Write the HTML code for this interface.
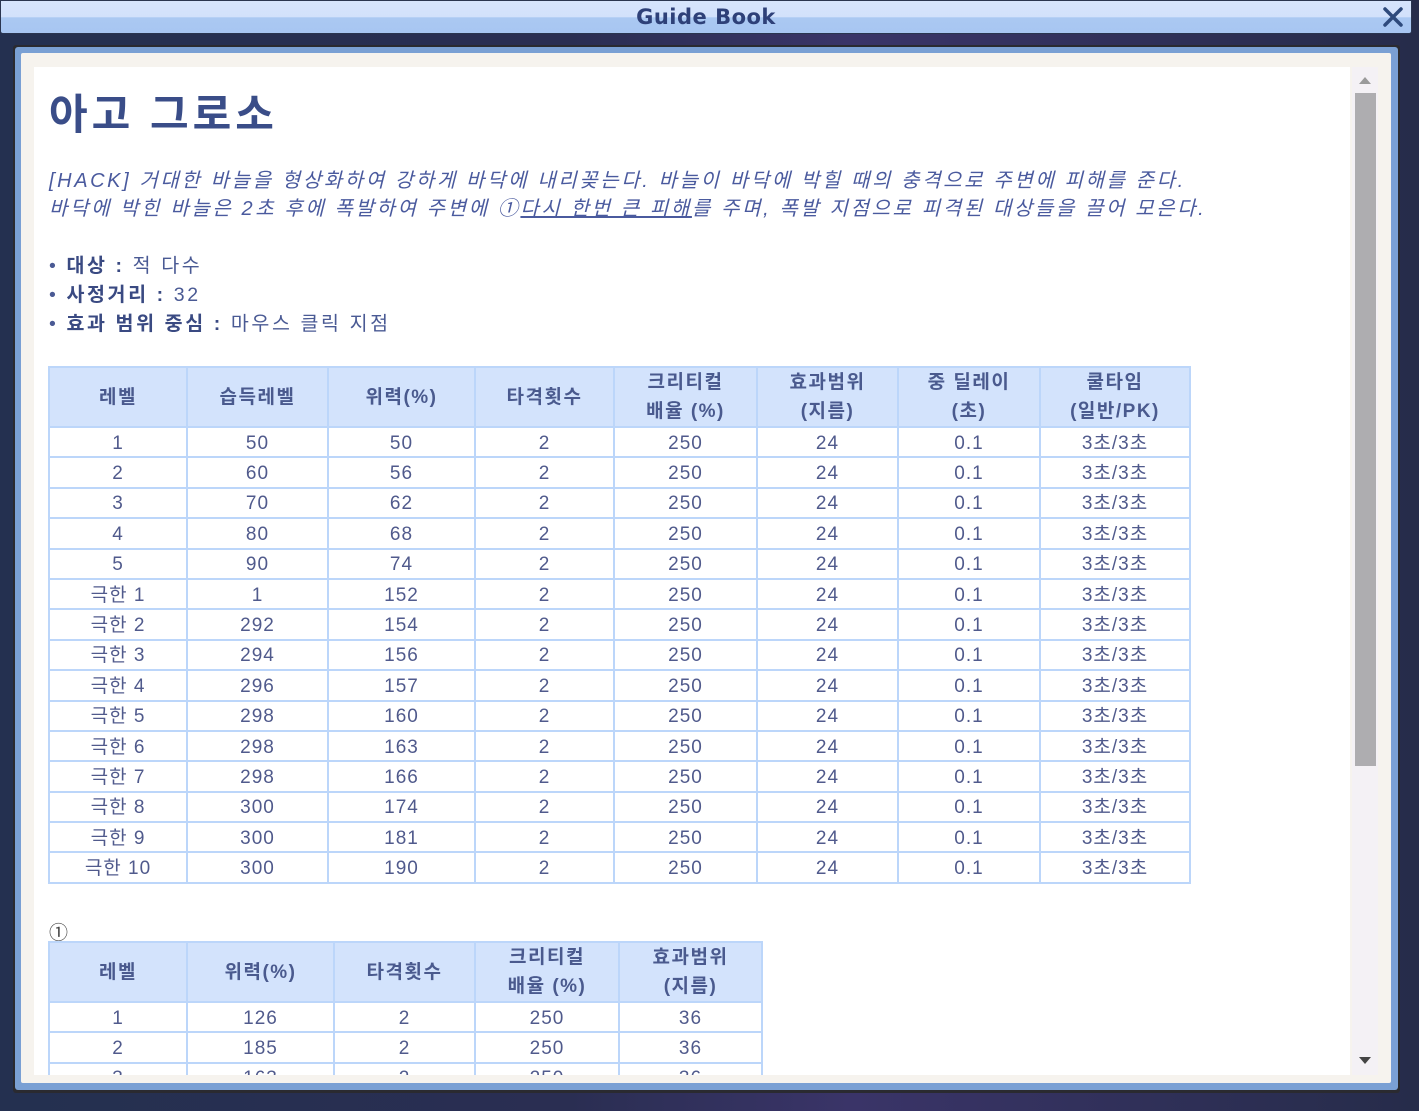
<!DOCTYPE html>
<html><head><meta charset="utf-8">
<style>
*{margin:0;padding:0;box-sizing:border-box}
body{width:1419px;height:1111px;overflow:hidden;background:#1e2238;font-family:"Liberation Sans","Noto Sans CJK KR",sans-serif;position:relative}
.bg{position:absolute;left:0;top:0;width:1419px;height:1111px;background:linear-gradient(90deg,#243050 0%,#2a2e52 40%,#3a3468 60%,#262c4a 100%)}
.title{position:absolute;left:0;top:0;width:1412px;height:34px;border:1px solid #2a3550;border-radius:0 0 3px 3px;background:linear-gradient(#d6e4fc 0,#d2e1fb 50%,#aac8f2 52%,#a8c6f2 100%)}
.title span{position:absolute;left:0;width:100%;top:4px;text-align:center;font-weight:bold;font-size:21px;color:#2e4078;font-family:"DejaVu Sans","Liberation Sans",sans-serif;letter-spacing:0.5px}
.x{position:absolute;left:1378px;top:2px;width:28px;height:28px}
.frame{position:absolute;left:13px;top:45px;width:1387px;height:1048px;background:#2a2a30;border-radius:3px}
.frame2{position:absolute;left:15px;top:47px;width:1383px;height:1043px;background:#7aa0d4;border-radius:3px}
.cream{position:absolute;left:21px;top:53px;width:1370px;height:1030px;background:#f6f3ee;border-radius:2px}
.content{position:absolute;left:34px;top:67px;width:1316px;height:1008px;background:#fff;overflow:hidden;color:#3e4d86}
.track{position:absolute;left:1352px;top:67px;width:26px;height:1008px;background:#f4f1f5}
.thumb{position:absolute;left:1355px;top:93px;width:21px;height:673px;background:#aeadb0}
.up{position:absolute;left:1359px;top:77px;width:0;height:0;border-left:6px solid transparent;border-right:6px solid transparent;border-bottom:7px solid #9a9a9a}
.dn{position:absolute;left:1359px;top:1057px;width:0;height:0;border-left:6px solid transparent;border-right:6px solid transparent;border-top:7px solid #444}
h1{position:absolute;left:15px;top:14px;font-size:42px;font-weight:bold;color:#3a4d88;letter-spacing:4px}
.desc{position:absolute;left:15px;top:100px;font-size:20px;font-style:italic;line-height:28px;color:#4a5a9e;white-space:nowrap;letter-spacing:2.6px}
.desc u{text-decoration:underline}
.bul{position:absolute;left:15px;top:185px;font-size:19.5px;line-height:29px;color:#4a5a94;white-space:nowrap;letter-spacing:2.6px}
.bul b{color:#3a4a82}
table{position:absolute;border-collapse:collapse;table-layout:fixed;color:#505a8c}
td,th{border:2px solid #bcd6fa;text-align:center;font-size:19px;padding:0;line-height:1;letter-spacing:1px}
th{background:#d3e3fc;font-weight:bold;color:#4a5a8e;font-size:19px;line-height:29px;letter-spacing:1.5px}
td{height:30.4px;padding-top:2px}
.c1{position:absolute;left:15px;top:851px;font-size:19px;color:#444}
</style></head><body>
<div class="bg"></div>
<div class="title"><span>Guide Book</span>
<svg class="x" viewBox="0 0 28 28"><path d="M6 6L22 22M22 6L6 22" stroke="#2e4a7c" stroke-width="3.5" stroke-linecap="round"/></svg></div>
<div class="frame"></div><div class="frame2"></div><div class="cream"></div>
<div class="content">
<h1>아고 그로소</h1>
<div class="desc">[HACK] 거대한 바늘을 형상화하여 강하게 바닥에 내리꽂는다. 바늘이 바닥에 박힐 때의 충격으로 주변에 피해를 준다.<br>바닥에 박힌 바늘은 2초 후에 폭발하여 주변에 ①<u>다시 한번 큰 피해</u>를 주며, 폭발 지점으로 피격된 대상들을 끌어 모은다.</div>
<div class="bul">• <b>대상 :</b> 적 다수<br>• <b>사정거리 :</b> 32<br>• <b>효과 범위 중심 :</b> 마우스 클릭 지점</div>
<table style="left:14px;top:299px;width:1141px">
<colgroup><col style="width:138px"><col style="width:141px"><col style="width:147px"><col style="width:139px"><col style="width:143px"><col style="width:141px"><col style="width:142px"><col style="width:150px"></colgroup>
<tr style="height:60px"><th>레벨</th><th>습득레벨</th><th>위력(%)</th><th>타격횟수</th><th>크리티컬<br>배율 (%)</th><th>효과범위<br>(지름)</th><th>중 딜레이<br>(초)</th><th>쿨타임<br>(일반/PK)</th></tr>
<tr><td>1</td><td>50</td><td>50</td><td>2</td><td>250</td><td>24</td><td>0.1</td><td>3초/3초</td></tr>
<tr><td>2</td><td>60</td><td>56</td><td>2</td><td>250</td><td>24</td><td>0.1</td><td>3초/3초</td></tr>
<tr><td>3</td><td>70</td><td>62</td><td>2</td><td>250</td><td>24</td><td>0.1</td><td>3초/3초</td></tr>
<tr><td>4</td><td>80</td><td>68</td><td>2</td><td>250</td><td>24</td><td>0.1</td><td>3초/3초</td></tr>
<tr><td>5</td><td>90</td><td>74</td><td>2</td><td>250</td><td>24</td><td>0.1</td><td>3초/3초</td></tr>
<tr><td>극한 1</td><td>1</td><td>152</td><td>2</td><td>250</td><td>24</td><td>0.1</td><td>3초/3초</td></tr>
<tr><td>극한 2</td><td>292</td><td>154</td><td>2</td><td>250</td><td>24</td><td>0.1</td><td>3초/3초</td></tr>
<tr><td>극한 3</td><td>294</td><td>156</td><td>2</td><td>250</td><td>24</td><td>0.1</td><td>3초/3초</td></tr>
<tr><td>극한 4</td><td>296</td><td>157</td><td>2</td><td>250</td><td>24</td><td>0.1</td><td>3초/3초</td></tr>
<tr><td>극한 5</td><td>298</td><td>160</td><td>2</td><td>250</td><td>24</td><td>0.1</td><td>3초/3초</td></tr>
<tr><td>극한 6</td><td>298</td><td>163</td><td>2</td><td>250</td><td>24</td><td>0.1</td><td>3초/3초</td></tr>
<tr><td>극한 7</td><td>298</td><td>166</td><td>2</td><td>250</td><td>24</td><td>0.1</td><td>3초/3초</td></tr>
<tr><td>극한 8</td><td>300</td><td>174</td><td>2</td><td>250</td><td>24</td><td>0.1</td><td>3초/3초</td></tr>
<tr><td>극한 9</td><td>300</td><td>181</td><td>2</td><td>250</td><td>24</td><td>0.1</td><td>3초/3초</td></tr>
<tr><td>극한 10</td><td>300</td><td>190</td><td>2</td><td>250</td><td>24</td><td>0.1</td><td>3초/3초</td></tr>
</table>
<div class="c1">①</div>
<table style="left:14px;top:874px;width:713px">
<colgroup><col style="width:138px"><col style="width:147px"><col style="width:141px"><col style="width:144px"><col style="width:143px"></colgroup>
<tr style="height:60px"><th>레벨</th><th>위력(%)</th><th>타격횟수</th><th>크리티컬<br>배율 (%)</th><th>효과범위<br>(지름)</th></tr>
<tr><td>1</td><td>126</td><td>2</td><td>250</td><td>36</td></tr>
<tr><td>2</td><td>185</td><td>2</td><td>250</td><td>36</td></tr>
<tr><td>3</td><td>163</td><td>2</td><td>250</td><td>36</td></tr>
</table>
</div>
<div class="track"></div><div class="thumb"></div><div class="up"></div><div class="dn"></div>
</body></html>
